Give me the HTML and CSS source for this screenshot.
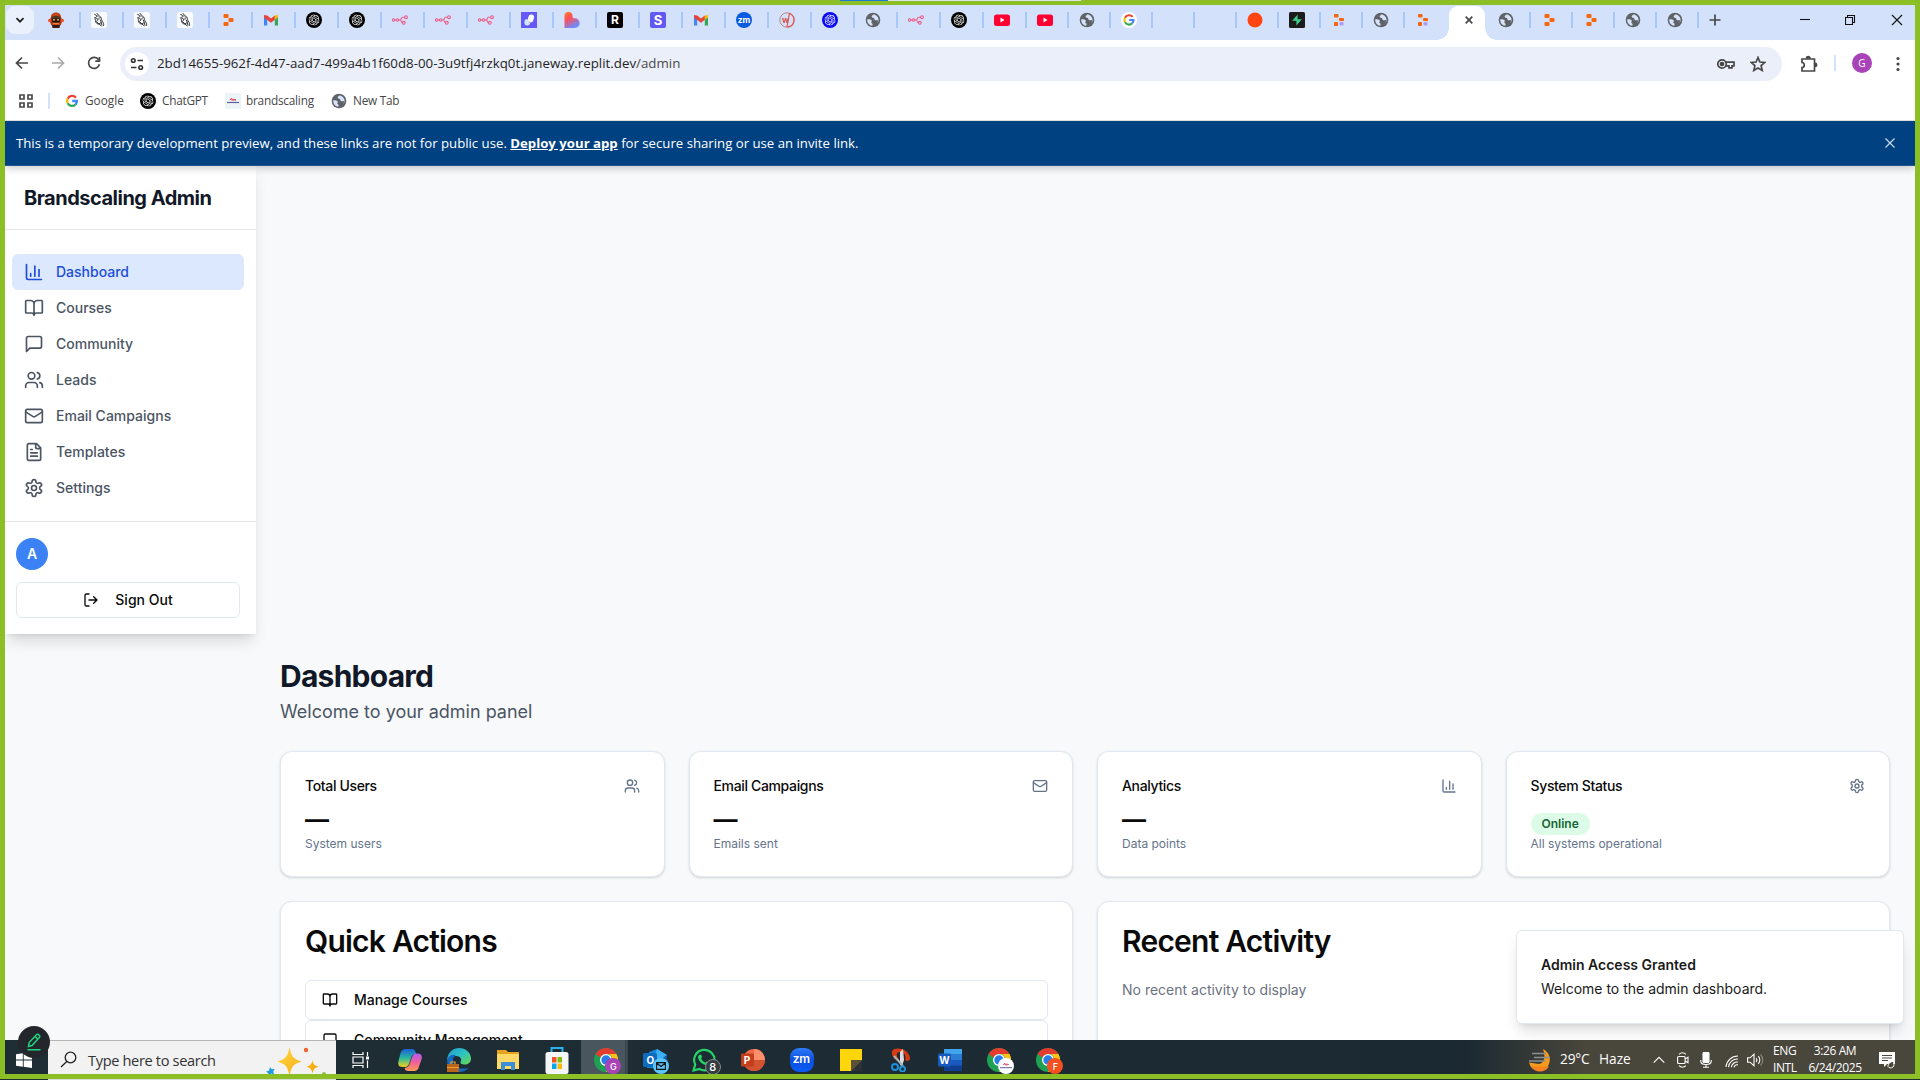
FILE: index.html
```html
<!DOCTYPE html>
<html lang="en">
<head>
<meta charset="utf-8">
<title>Brandscaling Admin</title>
<link rel="stylesheet" href="styles.css">
</head>
<body>
<svg class="defs" width="0" height="0" aria-hidden="true">
  <defs>
    <linearGradient id="g-copilot2" x1="0" y1="0" x2="0" y2="1"><stop offset="0" stop-color="#1b62d8"/><stop offset=".5" stop-color="#26b8a0"/><stop offset="1" stop-color="#f3d21b"/></linearGradient>
    <linearGradient id="g-copilot3" x1="0" y1="0" x2="0" y2="1"><stop offset="0" stop-color="#b05cf0"/><stop offset=".5" stop-color="#f0609a"/><stop offset="1" stop-color="#ff9b50"/></linearGradient>
    <linearGradient id="g-love" x1="0" y1="0" x2=".5" y2="1"><stop offset="0" stop-color="#ff7a18"/><stop offset=".45" stop-color="#ff4f5e"/><stop offset="1" stop-color="#6a8cff"/></linearGradient>
    <linearGradient id="g-edge" x1="0" y1="0" x2="1" y2="1"><stop offset="0" stop-color="#1f9ad8"/><stop offset=".5" stop-color="#2cc3c0"/><stop offset="1" stop-color="#6fd84a"/></linearGradient>
    <linearGradient id="g-star" x1="0" y1="0" x2="1" y2="1"><stop offset="0" stop-color="#ffd84a"/><stop offset="1" stop-color="#f5a300"/></linearGradient>
    <linearGradient id="g-zoom" x1="0" y1="0" x2="0" y2="1"><stop offset="0" stop-color="#2d7bf7"/><stop offset=".5" stop-color="#0b4fe0"/><stop offset="1" stop-color="#0a5cf5"/></linearGradient>
  </defs>
  <symbol id="flower" viewBox="0 0 24 24"><path fill="#fff" d="M22.282 9.821a5.985 5.985 0 0 0-.516-4.911 6.046 6.046 0 0 0-6.510-2.900A6.065 6.065 0 0 0 4.981 4.182a5.985 5.985 0 0 0-3.998 2.900 6.046 6.046 0 0 0 .743 7.097 5.980 5.980 0 0 0 .511 4.911 6.051 6.051 0 0 0 6.515 2.900A5.985 5.985 0 0 0 13.260 24a6.056 6.056 0 0 0 5.772-4.206 5.989 5.989 0 0 0 3.998-2.900 6.056 6.056 0 0 0-.748-7.073zm-9.022 12.608a4.476 4.476 0 0 1-2.876-1.041l.142-.080 4.778-2.758a.795.795 0 0 0 .393-.681v-6.737l2.020 1.169a.071.071 0 0 1 .038.052v5.583a4.504 4.504 0 0 1-4.495 4.494zm-9.661-4.125a4.471 4.471 0 0 1-.535-3.014l.142.085 4.783 2.758a.771.771 0 0 0 .781 0l5.843-3.369v2.332a.080.080 0 0 1-.033.062L9.740 19.950a4.499 4.499 0 0 1-6.141-1.646zM2.341 7.896a4.485 4.485 0 0 1 2.366-1.973V11.600a.766.766 0 0 0 .388.677l5.814 3.354-2.020 1.169a.076.076 0 0 1-.071 0l-4.830-2.787A4.504 4.504 0 0 1 2.341 7.872zm16.596 3.856L13.104 8.364 15.119 7.200a.076.076 0 0 1 .071 0l4.830 2.791a4.494 4.494 0 0 1-.677 8.104v-5.677a.790.790 0 0 0-.407-.667zm2.011-3.023l-.142-.085-4.774-2.782a.776.776 0 0 0-.785 0L9.409 9.230V6.897a.066.066 0 0 1 .028-.062l4.830-2.787a4.499 4.499 0 0 1 6.680 4.660zM8.307 12.863l-2.020-1.164a.080.080 0 0 1-.038-.057V6.074a4.499 4.499 0 0 1 7.376-3.454l-.142.081L8.704 5.459a.795.795 0 0 0-.393.681zm1.098-2.365l2.602-1.500 2.607 1.500v2.999l-2.597 1.500-2.607-1.500z"/></symbol>
  <symbol id="gpt" viewBox="0 0 16 16"><circle cx="8" cy="8" r="8"/><use href="#flower" x="2.500" y="2.500" width="11" height="11"/></symbol>
  <symbol id="gptblue" viewBox="0 0 16 16"><circle cx="8" cy="8" r="8" fill="#0a0af5"/><use href="#flower" x="2.500" y="2.500" width="11" height="11"/></symbol>
  <symbol id="globe" viewBox="0 0 16 16"><circle cx="8" cy="8" r="7.300" fill="#5f6368"/><path d="M2.200 7.200c2.400.1 4.200.4 4.600 1.300.3.900-.6 1.200-.5 2 .1.900 1.400.7 1.300 1.800l-.3 1.400C4.300 13.500 2 11 2.200 7.200zM8.500 2.200c-.3 1.100-1.900 1-1.900 2.200 0 1.500 2.400.9 2.700 2.300.3 1.300 1 1.900 2 1.500l1.500-.2c.5 1.300 0 2.600-1 3.800 3.100-2.700 2.300-8.300-3.300-9.600z" fill="#d6e3fb"/></symbol>
  <symbol id="rabbit" viewBox="0 0 16 16"><rect width="16" height="16" rx="2" fill="#f8fafd"/><path d="M3.300 2.300l2.500 1.200M5.800 1.200l1.700 2M4.500 5.500c1.200-2 4.200-2.200 5.300-.3 1 1.700.4 2.800 1.800 4.600 1 1.300 1.200 2.500.9 4M3.500 5.300c1 .7.600 3 1.300 4.800.5 1.300 1.700 1.900 3.200 2M4.500 5.500l2.500 2 2.500-2.500M7 7.500l-1.500 2L8 12l2.300-1.700L9 7.500M8 12l2.500 2M10.300 10.300l.7 3.200" stroke="#333" stroke-width="1" fill="none"/></symbol>
  <symbol id="replit" viewBox="0 0 16 16"><g fill="#f8650f"><rect x="3.500" y="2" width="5" height="4" rx="1"/><rect x="8.500" y="6" width="5" height="4" rx="1"/><rect x="3.500" y="10" width="5" height="4" rx="1"/></g></symbol>
  <symbol id="replitdev" viewBox="0 0 16 16"><g fill="#f8650f"><rect x="3" y="2" width="4.500" height="3.500" rx=".8"/><rect x="8" y="6" width="5" height="3" rx=".8"/><rect x="3" y="10" width="4" height="4" rx=".8"/></g><rect x="8.500" y="10" width="4" height="3.500" rx=".8" fill="#b49af5"/></symbol>
  <symbol id="gmail" viewBox="0 0 16 16"><path d="M1 4v9.500h3.200V7.300z" fill="#4285f4"/><path d="M15 4v9.500h-3.200V7.300z" fill="#34a853"/><path d="M11.800 3.500L15 3v2.500l-3.200 2.300z" fill="#fbbc04"/><path d="M1 3l3.200.5L8 6.500l3.800-3v4.300L8 10.700 1 5.500z" fill="#ea4335"/></symbol>
  <symbol id="n8n" viewBox="0 0 16 16"><g fill="none" stroke="#ee5a86" stroke-width="1.100"><circle cx="1.600" cy="8" r="1.200"/><circle cx="5.600" cy="8" r="1.200"/><circle cx="14" cy="5.200" r="1.400"/><circle cx="11.800" cy="10.800" r="1.400"/><path d="M2.800 8h1.600M6.800 8h1.300c1.500 0 .7-2.800 2.600-2.800h1.900M8.200 8c1.500 0 .7 2.800 2.200 2.800"/></g></symbol>
  <symbol id="youtube" viewBox="0 0 16 16"><rect y="2.500" width="16" height="11.500" rx="2.500" fill="#ff0033"/><path d="M6.500 5.500v5l4-2.500z" fill="#fff"/></symbol>
  <symbol id="google" viewBox="0 0 16 16"><g fill="none" stroke-width="2.600"><path d="M12.500 4.200A5.600 5.600 0 0 0 3.100 5.300" stroke="#ea4335"/><path d="M3.100 5.300a5.600 5.600 0 0 0 0 5.300" stroke="#fbbc04"/><path d="M3.100 10.600a5.600 5.600 0 0 0 8.800 1.500" stroke="#34a853"/><path d="M11.900 12.100A5.400 5.400 0 0 0 13.600 8H8.300" stroke="#4285f4"/></g></symbol>
  <symbol id="chrome" viewBox="0 0 24 24"><circle cx="12" cy="12" r="12" fill="#1fa052"/><path d="M12 0a12 12 0 0 1 10.400 6H12a6 6 0 0 0-5.500 3.500L1.600 6A12 12 0 0 1 12 0z" fill="#e33b2e"/><path d="M22.400 6A12 12 0 0 1 12 24l5.200-9A6 6 0 0 0 14.500 6z" fill="#fbc116"/><circle cx="12" cy="12" r="6" fill="#fff"/><circle cx="12" cy="12" r="4.700" fill="#2a7de8"/></symbol>
  <symbol id="chart" viewBox="0 0 24 24"><path d="M3 3v16a2 2 0 0 0 2 2h16M13 17V5M18 17V9M8 17v-3"/></symbol>
  <symbol id="book" viewBox="0 0 24 24"><path d="M12 7v14M3 18a1 1 0 0 1-1-1V4a1 1 0 0 1 1-1h5a4 4 0 0 1 4 4 4 4 0 0 1 4-4h5a1 1 0 0 1 1 1v13a1 1 0 0 1-1 1h-6a3 3 0 0 0-3 3 3 3 0 0 0-3-3z"/></symbol>
  <symbol id="message" viewBox="0 0 24 24"><path d="M21 15a2 2 0 0 1-2 2H7l-4 4V5a2 2 0 0 1 2-2h14a2 2 0 0 1 2 2z"/></symbol>
  <symbol id="users" viewBox="0 0 24 24"><path d="M16 21v-2a4 4 0 0 0-4-4H6a4 4 0 0 0-4 4v2M22 21v-2a4 4 0 0 0-3-3.870M16 3.130a4 4 0 0 1 0 7.750"/><circle cx="9" cy="7" r="4"/></symbol>
  <symbol id="mail" viewBox="0 0 24 24"><rect width="20" height="16" x="2" y="4" rx="2"/><path d="m22 7-8.970 5.700a1.940 1.940 0 0 1-2.060 0L2 7"/></symbol>
  <symbol id="file" viewBox="0 0 24 24"><path d="M15 2H6a2 2 0 0 0-2 2v16a2 2 0 0 0 2 2h12a2 2 0 0 0 2-2V7ZM14 2v4a2 2 0 0 0 2 2h4M10 9H8M16 13H8M16 17H8"/></symbol>
  <symbol id="gear" viewBox="0 0 24 24"><path d="M12.220 2h-.44a2 2 0 0 0-2 2v.18a2 2 0 0 1-1 1.730l-.43.25a2 2 0 0 1-2 0l-.15-.08a2 2 0 0 0-2.730.73l-.22.38a2 2 0 0 0 .73 2.730l.15.1a2 2 0 0 1 1 1.720v.51a2 2 0 0 1-1 1.740l-.15.09a2 2 0 0 0-.73 2.730l.22.38a2 2 0 0 0 2.730.73l.15-.08a2 2 0 0 1 2 0l.43.25a2 2 0 0 1 1 1.730V20a2 2 0 0 0 2 2h.44a2 2 0 0 0 2-2v-.18a2 2 0 0 1 1-1.730l.43-.25a2 2 0 0 1 2 0l.15.08a2 2 0 0 0 2.730-.73l.22-.39a2 2 0 0 0-.73-2.730l-.15-.08a2 2 0 0 1-1-1.740v-.5a2 2 0 0 1 1-1.740l.15-.09a2 2 0 0 0 .73-2.730l-.22-.38a2 2 0 0 0-2.730-.73l-.15.08a2 2 0 0 1-2 0l-.43-.25a2 2 0 0 1-1-1.730V4a2 2 0 0 0-2-2z"/><circle cx="12" cy="12" r="3"/></symbol>
  <symbol id="logout" viewBox="0 0 24 24"><path d="M9 21H5a2 2 0 0 1-2-2V5a2 2 0 0 1 2-2h4M16 17l5-5-5-5M21 12H9"/></symbol>
</svg>

<div class="screen">
  <div class="capture-tab"></div>
  <header class="tabstrip">
    <button class="tab-search"><svg class="ln" width="10" height="10" viewBox="0 0 10 10"><path d="M1.500 3.200L5 6.700l3.500-3.500"/></svg></button>
    <div class="tab first"><svg viewBox="0 0 16 16"><path d="M3 5c0-6 10-6 10 0l1.500 4-2 4.500h-9L1.500 9z" fill="#b23a16"/><path d="M4 3.500c1-3.500 7-3.500 8 0z" fill="#c9491f"/><circle cx="1.700" cy="8.500" r="1.700" fill="#e8502a"/><circle cx="14.300" cy="8.500" r="1.700" fill="#e8502a"/><path d="M3.500 5.500c2-2 7-2 9 0v2.500h-9z" fill="#4a3520"/><rect x="4" y="6.500" width="8" height="4" rx="1.500" fill="#24130e"/><circle cx="6" cy="7.800" r="1" fill="#f5b056"/><circle cx="10" cy="7.800" r="1" fill="#f5b056"/><path d="M4 13h8l-.5 3h-7z" fill="#3a1b12"/><path d="M5 11.700h6" stroke="#f08a3c" stroke-width="1.300"/></svg></div>
    <div class="tab"><svg><use href="#rabbit"/></svg></div>
    <div class="tab"><svg><use href="#rabbit"/></svg></div>
    <div class="tab"><svg><use href="#rabbit"/></svg></div>
    <div class="tab"><svg><use href="#replit"/></svg></div>
    <div class="tab"><svg><use href="#gmail"/></svg></div>
    <div class="tab"><svg><use href="#gpt"/></svg></div>
    <div class="tab"><svg><use href="#gpt"/></svg></div>
    <div class="tab"><svg><use href="#n8n"/></svg></div>
    <div class="tab"><svg><use href="#n8n"/></svg></div>
    <div class="tab"><svg><use href="#n8n"/></svg></div>
    <div class="tab"><svg viewBox="0 0 16 16"><rect width="16" height="16" fill="#6558f5"/><rect x="7" y="2.500" width="5.500" height="8" rx="2.700" fill="#fff" transform="rotate(15 10 7)"/><path d="M3.500 9.500a2.500 2.500 0 0 1 3-2.400c.2 2 .8 3.200 2.600 3.700a2.800 2.800 0 0 1-5.600-.3z" fill="#cfeaff"/></svg></div>
    <div class="tab"><svg viewBox="0 0 16 16"><path d="M.5 4a4 4 0 0 1 8 0c0 1.500.5 2.300 2.300 2.300a4.850 4.850 0 0 1 0 9.700H.5z" fill="url(#g-love)"/></svg></div>
    <div class="tab"><span class="fav fav-r">R</span></div>
    <div class="tab"><span class="fav fav-s">S</span></div>
    <div class="tab"><svg><use href="#gmail"/></svg></div>
    <div class="tab"><span class="fav fav-zm">zm</span></div>
    <div class="tab"><span class="fav fav-w">w<svg viewBox="0 0 16 16"><circle cx="8" cy="8" r="7.200" fill="none" stroke="#b9848a" stroke-width="1"/><path d="M10 1.200a7.200 7.200 0 0 1-1.500 14M10.500 1L8 15" fill="none" stroke="#e8524a" stroke-width="1.200"/></svg></span></div>
    <div class="tab"><svg><use href="#gptblue"/></svg></div>
    <div class="tab"><svg><use href="#globe"/></svg></div>
    <div class="tab"><svg><use href="#n8n"/></svg></div>
    <div class="tab"><svg><use href="#gpt"/></svg></div>
    <div class="tab"><svg><use href="#youtube"/></svg></div>
    <div class="tab narrow"><svg><use href="#youtube"/></svg></div>
    <div class="tab narrow"><svg><use href="#globe"/></svg></div>
    <div class="tab narrow"><svg viewBox="0 0 16 16"><circle cx="8" cy="8" r="8" fill="#fff"/><use href="#google" x="1.500" y="1.500" width="13" height="13"/></svg></div>
    <div class="tab narrow"></div>
    <div class="tab narrow"></div>
    <div class="tab narrow"><svg viewBox="0 0 16 16"><circle cx="8" cy="8" r="7.500" fill="#ff4612"/></svg></div>
    <div class="tab narrow"><svg viewBox="0 0 16 16"><rect width="16" height="16" rx="1.500" fill="#1c1c1c"/><path d="M8.600 2.500v4.700h4.200L7.400 13.500V8.800H3.200z" fill="#3ecf8e"/></svg></div>
    <div class="tab narrow"><svg><use href="#replitdev"/></svg></div>
    <div class="tab narrow"><svg><use href="#globe"/></svg></div>
    <div class="tab narrow last"><svg><use href="#replitdev"/></svg></div>
    <div class="tab-active"><svg class="ln" width="10" height="10" viewBox="0 0 10 10"><path d="M1.700 1.700l6.600 6.600M8.300 1.700L1.700 8.300"/></svg></div>
    <div class="tab narrow"><svg><use href="#globe"/></svg></div>
    <div class="tab narrow"><svg><use href="#replit"/></svg></div>
    <div class="tab narrow"><svg><use href="#replit"/></svg></div>
    <div class="tab narrow"><svg><use href="#globe"/></svg></div>
    <div class="tab narrow"><svg><use href="#globe"/></svg></div>
    <svg class="ln newtab" width="12" height="12" viewBox="0 0 12 12"><path d="M6 .5v11M.5 6h11"/></svg>
    <div class="winctl">
      <svg width="10" height="12" viewBox="0 0 10 12"><path d="M0 5.500h10"/></svg>
      <svg width="11" height="12" viewBox="0 0 11 12"><path d="M.5 3.500h7v7h-7zM2.500 3.500v-2h7v7h-2"/></svg>
      <svg width="12" height="12" viewBox="0 0 12 12"><path d="M1 1l10 10M11 1L1 11"/></svg>
    </div>
  </header>

  <div class="toolbar">
    <div class="navbtns">
      <svg class="ln" width="14" height="14" viewBox="0 0 14 14"><path d="M13 7H1.500M7 1.500L1.500 7 7 12.500"/></svg>
      <svg class="ln off" width="14" height="14" viewBox="0 0 14 14"><path d="M1 7h11.500M7 1.500L12.500 7 7 12.500"/></svg>
      <svg class="ln" width="14" height="14" viewBox="0 0 14 14"><path d="M12.400 8.200A5.500 5.500 0 1 1 11.600 3.800M12.500 1v4.200H8.300"/></svg>
    </div>
    <div class="urlbar">
      <span class="siteinfo"><svg width="14" height="14" viewBox="0 0 14 14"><g fill="none" stroke="#333" stroke-width="1.600"><circle cx="3.300" cy="3.500" r="1.800"/><path d="M7.500 3.500H13M1 10.500h5.500"/><circle cx="10.700" cy="10.500" r="1.800"/></g></svg></span>
      <span class="url">2bd14655-962f-4d47-aad7-499a4b1f60d8-00-3u9tfj4rzkq0t.janeway.replit.dev<span>/admin</span></span>
      <svg class="ln key" width="18" height="12" viewBox="0 0 18 12"><circle cx="5" cy="6" r="4.200"/><circle cx="5" cy="6" r="1.500" fill="#444"/><path d="M9 4.200h8v3.600h-2v2h-3v-2H9"/></svg>
      <svg class="ln star" width="16" height="16" viewBox="0 0 16 16"><path d="M8 1.500l1.900 4.500 4.900.4-3.700 3.200 1.100 4.800L8 11.900l-4.200 2.500 1.100-4.800L1.200 6.400 6.100 6z"/></svg>
    </div>
    <svg class="ln ext" width="18" height="18" viewBox="0 0 18 18"><path d="M2 4h12.500v12H2v-3.500c3 0 3-5 0-5z"/><path d="M6.500 3.500a1.800 1.800 0 0 1 3.600 0M15 8.300a1.600 1.600 0 0 1 0 3.200" fill="#444"/></svg>
    <i class="bar-sep"></i>
    <span class="profile">G</span>
    <svg class="kebab" width="4" height="16" viewBox="0 0 4 16"><circle cx="2" cy="2.500" r="1.600"/><circle cx="2" cy="8" r="1.600"/><circle cx="2" cy="13.500" r="1.600"/></svg>
  </div>

  <nav class="bookmarks">
    <svg class="ln apps" width="14" height="14" viewBox="0 0 14 14"><path d="M1 1h4v4H1zM9 1h4v4H9zM1 9h4v4H1zM9 9h4v4H9z"/></svg>
    <i class="bar-sep"></i>
    <span class="bm bm-google"><svg width="14" height="14"><use href="#google"/></svg><span>Google</span></span>
    <span class="bm bm-gpt"><svg width="16" height="16"><use href="#gpt"/></svg><span>ChatGPT</span></span>
    <span class="bm bm-brand"><svg width="16" height="16" viewBox="0 0 16 16"><rect width="16" height="16" fill="#edf4f8"/><path d="M2 9.500h12" stroke="#5a5f9e" stroke-width="1.200"/><path d="M5 6.800c1-1.600 2 1.600 3 0s2 1.600 3 0c-1-1.600-2 1.600-3 0s-2-1.600-3 0z" fill="none" stroke="#e0395a"/></svg><span>brandscaling</span></span>
    <span class="bm bm-new"><svg width="16" height="16"><use href="#globe"/></svg><span>New Tab</span></span>
  </nav>

  <div class="page">
    <div class="banner">
      <p>This is a temporary development preview, and these links are not for public use. <a>Deploy your app</a> for secure sharing or use an invite link.</p>
      <svg width="12" height="12" viewBox="0 0 12 12"><path d="M1.500 1.500l9 9M10.500 1.500l-9 9"/></svg>
    </div>
    <div class="layout">
      <aside class="sidebar">
        <h2>Brandscaling Admin</h2>
        <nav class="menu">
          <a class="active"><svg class="lu"><use href="#chart"/></svg><span>Dashboard</span></a>
          <a><svg class="lu"><use href="#book"/></svg><span>Courses</span></a>
          <a><svg class="lu"><use href="#message"/></svg><span>Community</span></a>
          <a><svg class="lu"><use href="#users"/></svg><span>Leads</span></a>
          <a><svg class="lu"><use href="#mail"/></svg><span>Email Campaigns</span></a>
          <a><svg class="lu"><use href="#file"/></svg><span>Templates</span></a>
          <a><svg class="lu"><use href="#gear"/></svg><span>Settings</span></a>
        </nav>
        <div class="account">
          <span class="avatar">A</span>
          <button class="signout"><svg class="lu sm"><use href="#logout"/></svg><span>Sign Out</span></button>
        </div>
      </aside>
      <main class="main">
        <h1>Dashboard</h1>
        <p class="lead">Welcome to your admin panel</p>
        <section class="stats">
          <article class="card stat"><header><span>Total Users</span><svg class="lu sm"><use href="#users"/></svg></header><strong>—</strong><small>System users</small></article>
          <article class="card stat"><header><span>Email Campaigns</span><svg class="lu sm"><use href="#mail"/></svg></header><strong>—</strong><small>Emails sent</small></article>
          <article class="card stat"><header><span>Analytics</span><svg class="lu sm"><use href="#chart"/></svg></header><strong>—</strong><small>Data points</small></article>
          <article class="card stat"><header><span>System Status</span><svg class="lu sm"><use href="#gear"/></svg></header><span class="badge">Online</span><small>All systems operational</small></article>
        </section>
        <section class="panels">
          <article class="card panel">
            <h3>Quick Actions</h3>
            <button class="action"><svg class="lu sm"><use href="#book"/></svg><span>Manage Courses</span></button>
            <button class="action"><svg class="lu sm"><use href="#message"/></svg><span>Community Management</span></button>
          </article>
          <article class="card panel">
            <h3>Recent Activity</h3>
            <p>No recent activity to display</p>
          </article>
        </section>
      </main>
    </div>
    <div class="toast"><b>Admin Access Granted</b><span>Welcome to the admin dashboard.</span></div>
  </div>

  <footer class="taskbar">
    <div class="start"><svg width="16" height="16" viewBox="0 0 16 16"><path d="M0 2.300L6.800 1.300v6.200H0zM7.700 1.200L16 0v7.500H7.700zM0 8.400h6.800v6.300L0 13.700zM7.700 8.400H16V16l-8.300-1.200z" fill="#fff"/></svg></div>
    <div class="search">
      <svg width="17" height="17" viewBox="0 0 17 17"><circle cx="10.500" cy="6.500" r="5.300"/><path d="M6.800 10.500L1 16"/></svg>
      <span>Type here to search</span>
      <svg class="sparkle" width="60" height="30" viewBox="0 0 60 30"><path d="M23.500 0c1.800 9 3.500 12 12 14.500-8.500 2.500-10.200 5.500-12 14.500-1.800-9-3.500-12-12-14.500C20 12 21.700 9 23.500 0zM46.500 13c.8 4 1.800 5.500 6 6.700-4.200 1.200-5.200 2.700-6 6.800-.8-4.100-1.800-5.600-6-6.800 4.200-1.200 5.200-2.700 6-6.700z" fill="url(#g-star)"/><path d="M4 20l1.700 2.300 3-.2-1.500 2.600 1 2.800-3-.9L2.500 29l-.2-2.800L0 24.500l3-.7z" fill="#1a9be8"/><circle cx="40" cy="3" r="2.200" fill="#f2622e"/><circle cx="58" cy="27" r="2" fill="#8bc34a"/></svg>
    </div>
    <div class="apps-row">
      <div class="app"><svg width="18" height="18" viewBox="0 0 18 18" fill="none" stroke="#fff" stroke-width="1.200"><path d="M1 1v2.500h10V1M1 17v-2.500h10V17M1 6h10v6H1zM15.500 1v4M15.500 9.500V17"/><path d="M14 5.500h3v3h-3z" fill="#fff" stroke="none"/></svg></div>
      <div class="app"><svg width="24" height="24" viewBox="0 0 24 22"><path d="M8 0h6c2 0 3 1 3.500 3l.5 2c-3 0-4 1-5 4l-2 6c-1 2-2 3-4 3H5c-4 0-5.500-2-4.500-6L2.500 4C3.500 1 5 0 8 0z" fill="url(#g-copilot2)"/><path d="M16 22h-6c-2 0-3-1-3.500-3 3-.5 4.500-2 5.500-5l2-6c1-2 2-3.500 4-3.500h1.500c4 0 5 2.500 4 6l-2.500 7c-1 3.500-2.500 4.500-5 4.500z" fill="url(#g-copilot3)"/></svg></div>
      <div class="app"><svg width="24" height="24" viewBox="0 0 24 24"><path d="M0 12C1 4 6 0 12 0c7 0 12 5 12 10.500 0 4-3 6-6.500 6-3 0-4.500-1-4-2.500 2-3-.5-6-4.500-6-5 0-8 3-9 4z" fill="url(#g-edge)"/><path d="M0 12c1-4 5-6 9-5-5 2-5 15 9 13.500 2 0 3-.5 4-1C19 23 16 24 12 24 5 24 0 19 0 12z" fill="#1468c0"/><path d="M0 16h12v8H0z" fill="#b9671a"/><path d="M4 16v-2h4v2M0 19.500h12" stroke="#f0a030" fill="none" stroke-width="1.200"/></svg></div>
      <div class="app"><svg width="22" height="22" viewBox="0 0 22 20"><path d="M0 0h9l2 2h11v17H0z" fill="#e5a420"/><path d="M0 4h22v15H0z" fill="#ffd966"/><path d="M4 20v-8h14v8h-4v-4H8v4z" fill="#3b8ed8"/></svg></div>
      <div class="app"><svg width="24" height="28" viewBox="0 0 24 28"><path d="M6.500 7V2h11v5" fill="none" stroke="#2bb0ee" stroke-width="2"/><rect x=".5" y="6" width="23" height="22" rx="2.500" fill="#f4f5f7"/><path d="M7 11h4.500v5.500H7z" fill="#f35325"/><path d="M12.500 11H17v5.500h-4.500z" fill="#81bc06"/><path d="M7 17.500h4.500V23H7z" fill="#05a6f0"/><path d="M12.500 17.500H17V23h-4.500z" fill="#ffba08"/></svg></div>
      <div class="app on"><svg width="24" height="24"><use href="#chrome"/></svg><em class="pip pip-g">G</em></div>
      <div class="app"><svg width="24" height="24" viewBox="0 0 24 24"><path d="M6 4l8-3 10 6v13H4z" fill="#1485d8"/><path d="M14 1l10 6-8 6-4-6z" fill="#3cb0f0"/><path d="M16 13l8-6v13z" fill="#0c56a8"/><rect y="5" width="14" height="14" rx="1.500" fill="#0f6cbd"/></svg><b class="ltr ltr-o">O</b><em class="pip pip-mail"><svg width="10" height="8" viewBox="0 0 10 8"><path d="M.6.6h8.800v6.800H.6zM.6 1L5 4.500 9.400 1" fill="none" stroke="#111" stroke-width="1.100"/></svg></em></div>
      <div class="app"><svg width="24" height="24" viewBox="0 0 24 24"><path d="M1.500 22.500l1.700-6A10.200 10.200 0 1 1 7.500 21z" fill="none" stroke="#25d366" stroke-width="2.200"/><path d="M8 6.500c1-.5 1.700 1 2 2s-1 1.500-.8 2c.7 1.800 2.200 3.300 4 4 .8.300 1.300-1.400 2-1.100 3 1.300 2.300 1.800 1.500 3-2.500 2.500-10.500-2-10.700-7.500 0-1 1-2 2-2.400z" fill="#25d366"/></svg><em class="pip pip-8">8</em></div>
      <div class="app"><svg width="24" height="22" viewBox="0 0 24 22"><circle cx="13" cy="11" r="11" fill="#ed6c47"/><path d="M13 0a11 11 0 0 1 11 11H13z" fill="#ff8f6b"/><path d="M24 11a11 11 0 0 1-22 0z" fill="#d35230"/><rect y="4.500" width="13" height="13" rx="1.200" fill="#c43e1c"/></svg><b class="ltr ltr-p">P</b></div>
      <div class="app"><svg width="24" height="24" viewBox="0 0 24 24"><rect width="24" height="24" rx="9" fill="url(#g-zoom)"/></svg><b class="ltr ltr-z">zm</b></div>
      <div class="app"><svg width="22" height="22" viewBox="0 0 22 22"><path d="M0 0h22v11L11 22H0z" fill="#ffd60a"/><path d="M11 11h11L11 22z" fill="#5a5138"/><path d="M22 11v11H11z" fill="#2c3138"/></svg></div>
      <div class="app"><svg width="20" height="24" viewBox="0 0 20 24"><path d="M3 1c6-2 15 1 16 9 0 3-3 4-5 2 2-5-2-8-5-8-4 0-4 4-1 8H5C1 9-1 4 3 1z" fill="#d83b12"/><path d="M12 1l1 11-2 6-2-1V4z" fill="#d9dde0"/><path d="M3 8l9 10" stroke="#aab2b8" stroke-width="2"/><circle cx="4" cy="19" r="3" fill="none" stroke="#1e90d8" stroke-width="2"/><circle cx="11.500" cy="21" r="2.500" fill="none" stroke="#1e90d8" stroke-width="2"/></svg></div>
      <div class="app"><svg width="24" height="22" viewBox="0 0 24 22"><path d="M6 0h18v22H6z" fill="#185abd"/><path d="M6 0h18v5.500H6z" fill="#41a5ee"/><path d="M6 5.500h18V11H6z" fill="#2b7cd3"/><path d="M6 16.500h18V22H6z" fill="#103f91"/><rect y="4.500" width="13" height="13" rx="1.200" fill="#185abd"/></svg><b class="ltr ltr-w">W</b></div>
      <div class="app"><svg width="24" height="24"><use href="#chrome"/></svg><em class="pip pip-b"><svg width="12" height="8" viewBox="0 0 12 8"><path d="M3.500 2.500c1-1.500 1.700 1.300 2.500 0s1.700 1.500 2.500 0c-1-1.500-1.700 1.300-2.500 0s-1.700-1.500-2.500 0z" fill="none" stroke="#d0335c" stroke-width=".9"/><path d="M0 5.700h12" stroke="#5a5f9e"/></svg></em></div>
      <div class="app"><svg width="24" height="24"><use href="#chrome"/></svg><em class="pip pip-f">F</em></div>
    </div>
    <div class="tray">
      <svg class="t-haze" width="24" height="24" viewBox="0 0 24 24"><path d="M15 1c7 4 8 10 6 15A10.500 10.500 0 0 1 1 14.500l10 1.500c5-1 7-6 4-15z" fill="#f39a1f"/><path d="M4 5.500h14M6 9.500h16M1 13h16" stroke="#8b8f92" stroke-width="1.600"/><path d="M3 18.500h18a10.500 10.500 0 0 1-18 0z" fill="#f5811f"/></svg>
      <span class="t-temp">29°C</span><span class="t-haze-txt">Haze</span>
      <svg class="tl t-up" width="12" height="8" viewBox="0 0 12 8"><path d="M.7 6.700L6 1.400l5.300 5.300"/></svg>
      <svg class="tl t-cam" width="12" height="16" viewBox="0 0 12 16"><rect x=".6" y="4.500" width="7.500" height="7" rx="1"/><path d="M8 7l3-1.800v5.600L8 9M2 2.300c2-1.800 5-1.800 7 0M2 13.700c2 1.800 5 1.800 7 0"/></svg>
      <svg class="tl t-mic" width="12" height="16" viewBox="0 0 12 16"><rect x="3" y=".5" width="6" height="10" rx="1" fill="#fff"/><path d="M.8 8v1.500c0 4 10.400 4 10.400 0V8M6 12.500V15M3 15.300h6"/></svg>
      <svg class="tl t-wifi" width="14" height="14" viewBox="0 0 14 14"><path d="M1 13A12 12 0 0 1 13 2M3.500 13.300A9 9 0 0 1 13 5M6.300 13.300A6 6 0 0 1 13 8M9 13.300a3.500 3.500 0 0 1 4-2.500"/></svg>
      <svg class="tl t-vol" width="17" height="14" viewBox="0 0 17 14"><path d="M.6 4.800h2.500L7 1.200v11.600L3.100 9.200H.6zM9 5a3 3 0 0 1 0 4M11.300 3.200a5.500 5.500 0 0 1 0 7.600"/><path d="M13.600 1.500a8 8 0 0 1 0 11" stroke="#8b887e"/></svg>
      <div class="t-lang"><span>ENG</span><span>INTL</span></div>
      <div class="t-time"><span>3:26 AM</span><span>6/24/2025</span></div>
      <svg class="t-note" width="17" height="17" viewBox="0 0 17 17"><path d="M0 0h16v12H8l-3 3v-3H0z" fill="#fff"/><path d="M3 3.500h10M3 6h10M3 8.500h6" stroke="#49463b"/><path d="M9 14.500c0-2 1-5 6-5-1 2 1 4-1 5.500s-4 1-5-.5z" fill="#49463b" stroke="#fff"/></svg>
    </div>
  </footer>
  <div class="edge-line"></div>
  <div class="pen"><svg width="16" height="18" viewBox="0 0 16 18"><path d="M2.500 13.500l.7-4L10.500 1.800c1.500-1.500 4.300 1.200 2.800 2.800L6 12.500zM9 3.500l2.800 2.700M1.500 16.800h13"/></svg></div>
</div>
</body>
</html>
```
FILE: styles.css
```css
* { box-sizing: border-box; margin: 0; padding: 0; }
body { width: 1920px; height: 1080px; overflow: hidden; background: #8cbf26; font-family: "Open Sans", "Noto Sans", sans-serif; }
svg { display: block; flex: none; }
button { font: inherit; background: none; border: 0; }
.defs { position: absolute; }
.screen { position: relative; width: 1920px; height: 1080px; padding: 5px 5px 0; display: flex; flex-direction: column; background: #8cbf26; overflow: hidden; }
.capture-tab { position: absolute; top: 0; left: 840px; width: 241px; height: 1px; background: linear-gradient(90deg, #1a78d6 48px, #dfe3e6 48px); }
.ln { fill: none; stroke: #474747; stroke-width: 1.7; }

/* browser tabs */
.tabstrip { height: 35px; display: flex; background: #d3e1fb; flex: none; }
.tab-search { width: 28px; height: 28px; margin: 1px 4px 0 1px; border-radius: 9px; background: #eaf0fc; display: flex; align-items: center; justify-content: center; }
.tab-search .ln { stroke: #1f1f1f; }
.tab { width: 43px; height: 16px; margin-top: 7px; padding-left: 10px; border-right: 2px solid #a8c7fa; flex: none; }
.tab.narrow { width: 42.05px; }
.tab.last { border-color: transparent; }
.tab svg, .fav { width: 16px; height: 16px; }
.fav { display: flex; align-items: center; justify-content: center; font: 700 12px/16px "Inter", sans-serif; color: #fff; }
.fav-r { background: #000; border-radius: 2px; }
.fav-s { background: #6259f5; border-radius: 2px; font-size: 13px; }
.fav-zm { background: #0b5be0; border-radius: 8px; font-size: 8.5px; }
.fav-w { position: relative; color: #d4524e; font-size: 8.5px; padding-right: 3px; }
.fav-w svg { position: absolute; inset: 0; }
.tab-active { position: relative; width: 36px; height: 34px; margin: 1px 3px 0 2px; background: #fff; border-radius: 9px 9px 0 0; display: flex; align-items: center; justify-content: center; padding: 0 0 6px 4px; }
.tab-active::before, .tab-active::after { content: ""; position: absolute; bottom: 0; width: 12px; height: 12px; }
.tab-active::before { left: -12px; background: radial-gradient(circle at 0 0, transparent 11.5px, #fff 12px); }
.tab-active::after { right: -12px; background: radial-gradient(circle at 100% 0, transparent 11.5px, #fff 12px); }
.newtab { margin: 9px 0 0 10px; }
.winctl { margin-left: auto; padding: 9px 12px 0 0; display: flex; gap: 35px; fill: none; stroke: #111; stroke-width: 1.1; }

/* address bar */
.toolbar { height: 41px; background: #fff; display: flex; align-items: center; padding: 4px 8px 0 10px; flex: none; }
.navbtns { display: flex; gap: 22px; width: 105px; }
.off { stroke: #ababab; }
.urlbar { width: 1662px; height: 34px; margin-top: 3px; border-radius: 17px; background: #ebeff9; display: flex; align-items: center; padding: 0 16px 0 5px; }
.siteinfo { width: 24px; height: 24px; border-radius: 12px; background: #fff; display: flex; align-items: center; justify-content: center; }
.url { margin: -2px 0 0 8px; flex: 1; font-size: 13.3px; color: #1f1f1f; white-space: nowrap; }
.url span { color: #4a4a4a; }
.star { margin-left: 15px; }
.ext { margin: 2px 16px 0 18px; }
.bar-sep { width: 2px; height: 16px; background: #d3e1fb; }
.profile { margin: 1px 24px 0 16px; width: 20px; height: 20px; border-radius: 50%; background: #a843b8; color: #fff; font-size: 10px; line-height: 20px; text-align: center; }
.kebab { fill: #474747; margin-top: 3px; }

.bookmarks { height: 40px; background: #fff; border-bottom: 1px solid #dcdfe0; display: flex; align-items: center; padding-left: 14px; flex: none; font-size: 11.8px; color: #474747; }
.bookmarks .bar-sep { margin: 0 16px 0 15px; }
.bm { display: flex; align-items: center; gap: 6px; white-space: nowrap; }
.bm > span { margin-top: -2px; }
.bm-google { width: 75px; margin-left: -1px; }
.bm-gpt { width: 85px; letter-spacing: -.25px; }
.bm-brand { width: 106px; letter-spacing: -.22px; gap: 5px; }
.bm-new { gap: 6px; letter-spacing: -.25px; }

/* page */
.page { position: relative; height: 919px; background: #f8f9fb; overflow: hidden; flex: none; font-family: "Inter", sans-serif; }
.banner { position: relative; z-index: 3; height: 45px; background: #004182; border-bottom: 1px solid #1f5590; box-shadow: 0 2px 8px rgba(0,0,0,.22); display: flex; align-items: center; justify-content: space-between; padding: 0 19px 0 11px; color: #fff; font: 13.2px "Open Sans", "Noto Sans", sans-serif; }
.banner a { font-weight: 700; text-decoration: underline; }
.banner svg { stroke: #c9d8e8; fill: none; stroke-width: 1.2; }
.layout { display: grid; grid-template-columns: 251px 1fr; grid-template-rows: 468px auto; }
.lu { width: 20px; height: 20px; fill: none; stroke: currentColor; stroke-width: 2; stroke-linecap: round; stroke-linejoin: round; }
.lu.sm { width: 16px; height: 16px; }
.lu + span { padding-bottom: 2px; }
.sidebar { background: #fff; box-shadow: 0 10px 15px -3px rgba(0,0,0,.13), 0 4px 6px -4px rgba(0,0,0,.12); display: flex; flex-direction: column; }
.sidebar h2 { height: 64px; padding: 18px 19px 0; font: 700 20px/28px "Inter", sans-serif; letter-spacing: -0.5px; color: #111827; border-bottom: 1px solid #e5e7eb; }
.menu { padding: 24px 12px 0 7px; height: 291px; }
.menu a { height: 36px; display: flex; align-items: center; gap: 12px; padding-left: 12px; border-radius: 6px; font-size: 14px; font-weight: 500; color: #4b5563; }
.menu a.active { background: #dbe8fe; color: #1d4ed8; }
.account { border-top: 1px solid #e5e7eb; padding: 16px 16px 0 11px; flex: 1; }
.avatar { display: block; width: 32px; height: 32px; border-radius: 50%; background: #3b82f6; color: #fff; font: 600 14px/32px "Inter", sans-serif; text-align: center; }
.signout { width: 224px; height: 36px; margin-top: 12px; border: 1px solid #e2e8f0; border-radius: 6px; display: flex; align-items: center; justify-content: center; gap: 16px; font-size: 14px; font-weight: 500; color: #0a0a0a; }
.main { grid-column: 2; grid-row: 2; padding: 24px 25px 0 24px; }
.main h1 { font: 700 30px/36px "Inter", sans-serif; letter-spacing: -0.75px; color: #111827; }
.lead { margin-top: 4px; font-size: 18px; line-height: 28px; color: #4b5563; }
.card { background: #fff; border: 1px solid #e2e8f0; border-radius: 12px; box-shadow: 0 1px 3px rgba(0,0,0,.1), 0 1px 2px rgba(0,0,0,.06); }
.stats { margin-top: 25px; display: grid; grid-template-columns: repeat(4, 1fr); gap: 24px; }
.stat { height: 126px; padding: 24px; display: flex; flex-direction: column; align-items: flex-start; color: #0a0a0a; }
.stat header { align-self: stretch; display: flex; justify-content: space-between; align-items: center; height: 20px; font-size: 14px; font-weight: 500; letter-spacing: -0.35px; }
.stat header span { padding-bottom: 2px; }
.stat header svg { color: #64748b; }
.stat strong { margin-top: 8px; height: 32px; font-size: 24px; line-height: 32px; font-weight: 700; }
.stat small { font-size: 12px; line-height: 16px; color: #64748b; }
.badge { margin: 17px 0 1px; height: 22px; padding: 0 11px; border-radius: 11px; background: #dcfce7; color: #166534; font-size: 12px; line-height: 21px; font-weight: 600; }
.panels { margin-top: 24px; display: grid; grid-template-columns: 1fr 1fr; gap: 24px; }
.panel { height: 260px; padding: 24px; color: #0a0a0a; }
.panel h3 { font: 600 30px/30px "Inter", sans-serif; letter-spacing: -0.77px; margin-bottom: 24px; }
.panel p { font-size: 14px; line-height: 20px; color: #6b7280; }
.action { width: 100%; height: 40px; display: flex; align-items: center; gap: 16px; padding-left: 16px; border: 1px solid #e2e8f0; border-radius: 6px; font-size: 14px; font-weight: 500; color: #0a0a0a; }
.toast { position: absolute; z-index: 4; left: 1511px; top: 809px; width: 388px; height: 94px; padding: 24px; background: #fff; border: 1px solid #e2e8f0; border-radius: 6px; box-shadow: 0 10px 15px -3px rgba(0,0,0,.13), 0 4px 6px -4px rgba(0,0,0,.12); display: flex; flex-direction: column; gap: 4px; font-size: 14px; line-height: 20px; color: #1a1a1a; }
.toast b { font-weight: 600; }

/* taskbar */
.taskbar { height: 34px; overflow: hidden; flex: none; display: flex; background: linear-gradient(90deg, #1f2d35 0, #1b2932 1460px, #49463b 1580px); color: #fff; }
.start { width: 43px; padding: 12px 0 0 11px; }
.search { width: 288px; background: #f2f2f2; border-top: 1px solid #b5b5b5; display: flex; align-items: flex-start; padding: 10px 10px 0 12px; color: #333; font-size: 14.6px; }
.search > svg:first-child { fill: none; stroke: #222; stroke-width: 1.3; }
.search span { margin: -2px 0 0 11px; line-height: 22px; white-space: nowrap; letter-spacing: -0.35px; }
.search .sparkle { margin: -4px 0 0 auto; }
.apps-row { display: flex; }
.app { position: relative; width: 49.1px; height: 40px; display: flex; align-items: center; justify-content: center; }
.app.on { background: linear-gradient(90deg, #4a565d 44px, #2f3c44 44px, #4a565d 46px, #1f2d35 47px); }
.pip { position: absolute; left: 24px; top: 18px; width: 16px; height: 16px; border-radius: 50%; display: flex; align-items: center; justify-content: center; font: 500 9px "Inter", sans-serif; color: #fff; }
.pip-g { background: #a843b8; }
.pip-mail { background: #5cc5f7; left: 22px; }
.pip-8 { background: #333b3f; border: 1px solid #85898b; font-size: 11px; left: 25px; top: 19px; }
.pip-b { background: #fff; }
.pip-f { background: #f4511e; }
.ltr { position: absolute; font: 700 10px/12px "Inter", sans-serif; left: 15px; top: 14px; }
.ltr-o { left: 16px; }
.ltr-w { left: 14px; }
.ltr-z { left: 15px; top: 13px; font-size: 12px; font-weight: 600; letter-spacing: -.5px; }
.tray { margin-left: auto; display: flex; align-items: flex-start; width: 387px; font-size: 13.7px; }
.tray > * { flex: none; }
.tl { fill: none; stroke: #fff; stroke-width: 1.1; }
.t-haze { margin-top: 8px; width: 24px; }
.t-temp { margin: 9px 0 0 8px; width: 39px; line-height: 20px; letter-spacing: -.2px; }
.t-haze-txt { margin-top: 9px; width: 53px; line-height: 20px; }
.t-up { margin: 16px 12px 0 1px; }
.t-cam { margin: 12px 11px 0 0; }
.t-mic { margin: 12px 13px 0 0; }
.t-wifi { margin: 14px 8px 0 0; }
.t-vol { margin-top: 13px; }
.t-lang, .t-time { display: flex; flex-direction: column; font-size: 12px; line-height: 17px; margin-top: 2px; letter-spacing: -.4px; }
.t-lang { margin-left: 9px; width: 36px; }
.t-time { width: 52px; align-items: center; white-space: nowrap; }
.t-note { margin: 12px 0 0 18px; }
.edge-line { position: absolute; left: 0; right: 0; bottom: 0; height: 1px; background: linear-gradient(90deg, #1f2d35 48px, #d8dcd8 48px 336px, #1f2d35 336px); }
.pen { position: absolute; left: 18px; top: 1026px; width: 32px; height: 32px; border-radius: 50%; background: #23272b; display: flex; align-items: center; justify-content: center; }
.pen svg { fill: none; stroke: #1fd47f; stroke-width: 1.5; }
```
